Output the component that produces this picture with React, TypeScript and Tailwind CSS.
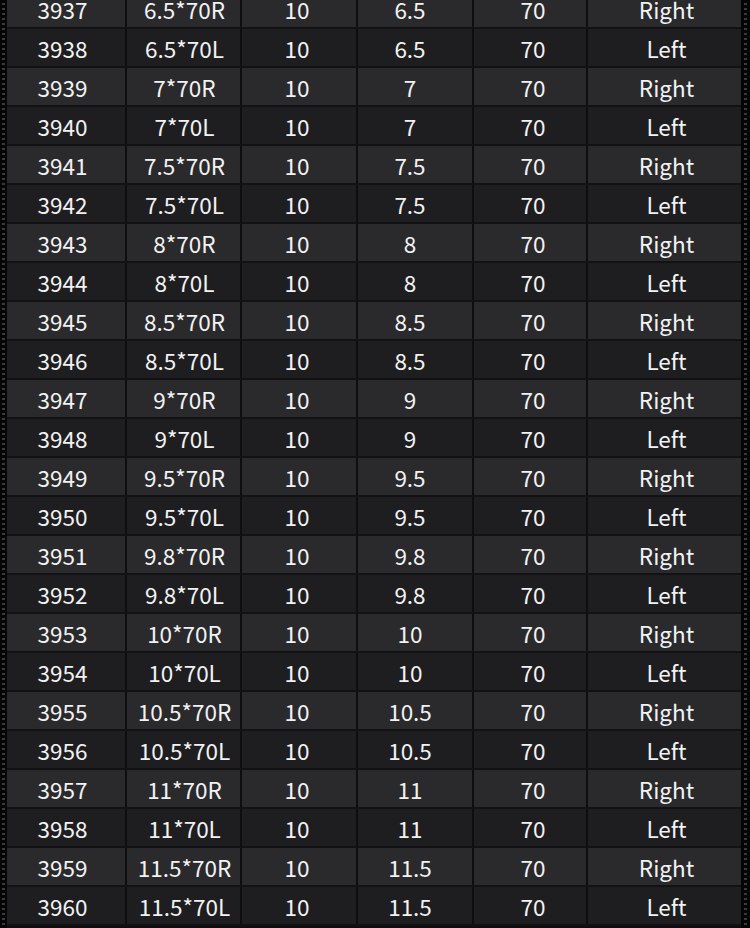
import React from "react";

const rows: [string, string, string, string, string, string][] = [];
const sizes = ["6.5", "7", "7.5", "8", "8.5", "9", "9.5", "9.8", "10", "10.5", "11", "11.5"];
let n = 3937;
for (const s of sizes) {
  rows.push([String(n++), `${s}*70R`, "10", s, "70", "Right"]);
  rows.push([String(n++), `${s}*70L`, "10", s, "70", "Left"]);
}

const cols = [
  "w-[127px] border-r-2 border-[#0e0e10]",
  "w-[115px] border-r-2 border-[#0e0e10] pl-[2px]",
  "w-[116px] border-r-2 border-[#0e0e10] pr-[4px]",
  "w-[116px] border-r-2 border-[#0e0e10] pr-[10px]",
  "w-[114px] border-r-2 border-[#0e0e10] pl-[6px]",
  "w-[153px] pl-[4px]",
];

export default function App() {
  return (
    <div
      className="relative w-[750px] h-[928px] overflow-hidden bg-[#0d0d0e] text-[#f2f2f2]"
      style={{ fontFamily: '"Noto Sans CJK SC", "Noto Sans", sans-serif' }}
    >
      <div className="mt-[-10px] flex flex-col">
        {rows.map((r, i) => (
          <div
            key={i}
            className={`flex h-[39px] border-b-2 border-[#121214] ${
              i % 2 === 0 ? "bg-[#2a2a2d]" : "bg-[#1e1e21]"
            }`}
          >
            {r.map((c, j) => (
              <div
                key={j}
                className={`${cols[j]} shrink-0 flex items-center justify-center text-[22.5px] leading-none pt-[1px]`}
              >
                {c}
              </div>
            ))}
          </div>
        ))}
      </div>
      <div className="absolute left-0 top-0 h-full w-[7px] bg-[#050505] bg-[repeating-linear-gradient(180deg,#050505_0px,#050505_3px,#3a3a3c_3px,#3a3a3c_5px)] bg-[length:3px_100%] bg-[position:2px_0] bg-no-repeat" />
      <div className="absolute right-0 top-0 h-full w-[9px] bg-[#050505] bg-[repeating-linear-gradient(180deg,#050505_0px,#050505_3px,#3a3a3c_3px,#3a3a3c_5px)] bg-[length:3px_100%] bg-[position:3px_0] bg-no-repeat" />
    </div>
  );
}
